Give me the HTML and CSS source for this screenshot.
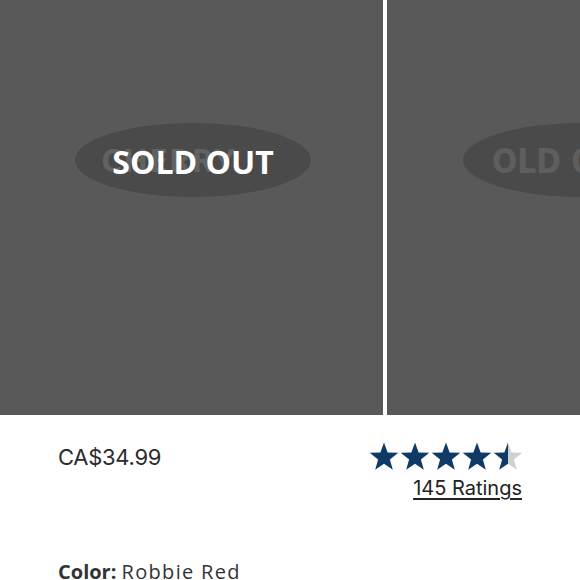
FILE: index.html
```html
<!DOCTYPE html>
<html>
<head>
<meta charset="utf-8">
<link rel="stylesheet" href="styles.css">
</head>
<body>
<div class="gallery">
  <div class="photo">
    <div class="badge">
      <span class="ghost">CHERRY</span>
      <span class="sold">SOLD OUT</span>
    </div>
  </div>
  <div class="photo photo-2">
    <div class="badge badge-2">
      <span class="sold-dim">OLD OUT</span>
    </div>
  </div>
</div>
<div class="info">
  <div class="price">CA$34.99</div>
  <div class="rating">
    <div class="stars">
      <svg width="154" height="28" viewBox="0 0 154 28">
        <defs>
          <path id="st" d="M15 0.5 L18.64 10.48 L29.27 10.86 L20.9 17.42 L23.82 27.64 L15 21.7 L6.18 27.64 L9.1 17.42 L0.73 10.86 L11.36 10.48 Z"/>
          <linearGradient id="half" x1="0" y1="0" x2="1" y2="0">
            <stop offset="0.5" stop-color="#0f3a66"/>
            <stop offset="0.5" stop-color="#d0d0d0"/>
          </linearGradient>
        </defs>
        <use href="#st" x="0" fill="#0f3a66"/>
        <use href="#st" x="31" fill="#0f3a66"/>
        <use href="#st" x="62" fill="#0f3a66"/>
        <use href="#st" x="93" fill="#0f3a66"/>
        <path transform="translate(124,0)" d="M15 0.5 L18.64 10.48 L29.27 10.86 L20.9 17.42 L23.82 27.64 L15 21.7 L6.18 27.64 L9.1 17.42 L0.73 10.86 L11.36 10.48 Z" fill="url(#half)"/>
      </svg>
    </div>
    <a class="count">145 Ratings</a>
  </div>
</div>
<div class="color"><b>Color:</b> <span class="cname">Robbie Red</span></div>
</body>
</html>
```
FILE: styles.css
```css
html, body {
  margin: 0;
  padding: 0;
  background: #fff;
  overflow: hidden;
  width: 580px;
  height: 580px;
}
.gallery {
  display: flex;
  gap: 4px;
  height: 415px;
  overflow: hidden;
}
.photo {
  flex: 0 0 383px;
  background: #595959;
  position: relative;
}
.badge {
  position: absolute;
  left: 75px;
  top: 123px;
  width: 236px;
  height: 74px;
  border-radius: 50%;
  background: #4a4a4a;
  display: flex;
  align-items: center;
  justify-content: center;
  font-family: "Open Sans", "DejaVu Sans", sans-serif;
  font-weight: 700;
  overflow: hidden;
}
.ghost {
  position: absolute;
  left: 26px;
  top: 14px;
  font-size: 33px;
  color: #626262;
  letter-spacing: 1px;
}
.sold {
  position: relative;
  color: #fff;
  font-size: 32px;
  letter-spacing: 0;
  top: 1px;
  white-space: nowrap;
}
.badge-2 {
  left: 76px;
  justify-content: flex-start;
}
.sold-dim {
  margin-left: 29px;
  color: #5e5e5e;
  font-family: "Liberation Sans Narrow", "DejaVu Sans Condensed", sans-serif;
  font-size: 33px;
  font-weight: 700;
  white-space: nowrap;
  position: relative;
  top: 1px;
}
.info {
  display: flex;
  justify-content: space-between;
  padding: 27px 58px 0 58px;
  font-family: "Inter", "Open Sans", sans-serif;
  color: #2b2b2b;
}
.price {
  font-size: 22px;
  padding-top: 2px;
  letter-spacing: -0.3px;
}
.rating {
  display: flex;
  flex-direction: column;
  align-items: flex-end;
}
.stars {
  height: 28px;
  margin-right: -1px;
}
.stars svg { display: block; }
.count {
  font-size: 20px;
  color: #222;
  text-decoration: underline;
  text-underline-offset: 3px;
  margin-top: 6px;
}
.color {
  padding: 61px 58px 0 58px;
  font-family: "Open Sans", sans-serif;
  font-size: 20px;
  line-height: 22px;
  color: #333;
}
.color b { font-weight: 700; }
.cname { letter-spacing: 1.3px; }
```
